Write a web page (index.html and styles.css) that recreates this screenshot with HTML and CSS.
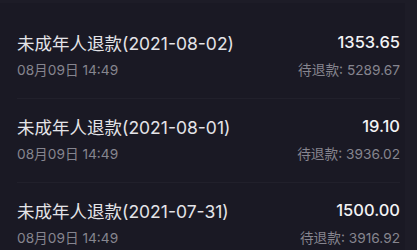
FILE: index.html
```html
<!DOCTYPE html>
<html lang="zh">
<head>
<meta charset="utf-8">
<link rel="stylesheet" href="styles.css">
</head>
<body>
<div class="page">
  <div class="list">
    <div class="item first">
      <div class="row">
        <span class="title">未成年人退款(2021-08-02)</span>
        <span class="amount">1353.65</span>
      </div>
      <div class="row sub">
        <span class="date">08月09日 14:49</span>
        <span class="pending">待退款: 5289.67</span>
      </div>
    </div>
    <div class="item">
      <div class="row">
        <span class="title">未成年人退款(2021-08-01)</span>
        <span class="amount">19.10</span>
      </div>
      <div class="row sub">
        <span class="date">08月09日 14:49</span>
        <span class="pending">待退款: 3936.02</span>
      </div>
    </div>
    <div class="item">
      <div class="row">
        <span class="title">未成年人退款(2021-07-31)</span>
        <span class="amount">1500.00</span>
      </div>
      <div class="row sub">
        <span class="date">08月09日 14:49</span>
        <span class="pending">待退款: 3916.92</span>
      </div>
    </div>
  </div>
</div>
</body>
</html>
```
FILE: styles.css
```css
html, body {
  margin: 0;
  padding: 0;
  height: 100%;
  background: #1d1c27;
  overflow: hidden;
}
body {
  font-family: "Inter", "Noto Sans CJK SC", sans-serif;
}
.page {
  padding: 3px 12px 0 0;
  height: 100%;
  box-sizing: border-box;
  overflow: hidden;
}
.list {
  background: #1a1924;
  height: 100%;
  padding-left: 17px;
  padding-right: 5px;
  overflow: hidden;
}
.item {
  border-top: 1px solid #21202b;
  padding: 15px 0 20px;
}
.item.first {
  border-top: none;
  padding-top: 27px;
}
.row {
  display: flex;
  justify-content: space-between;
  align-items: center;
  height: 24px;
}
.row.sub {
  height: 18px;
  margin-top: 6px;
}
.title {
  font-size: 17.5px;
  color: #e4e4e8;
}
.amount {
  font-size: 16.5px;
  font-weight: 500;
  color: #f2f2f4;
}
.date, .pending {
  font-size: 13.7px;
  color: #86858f;
}
```
